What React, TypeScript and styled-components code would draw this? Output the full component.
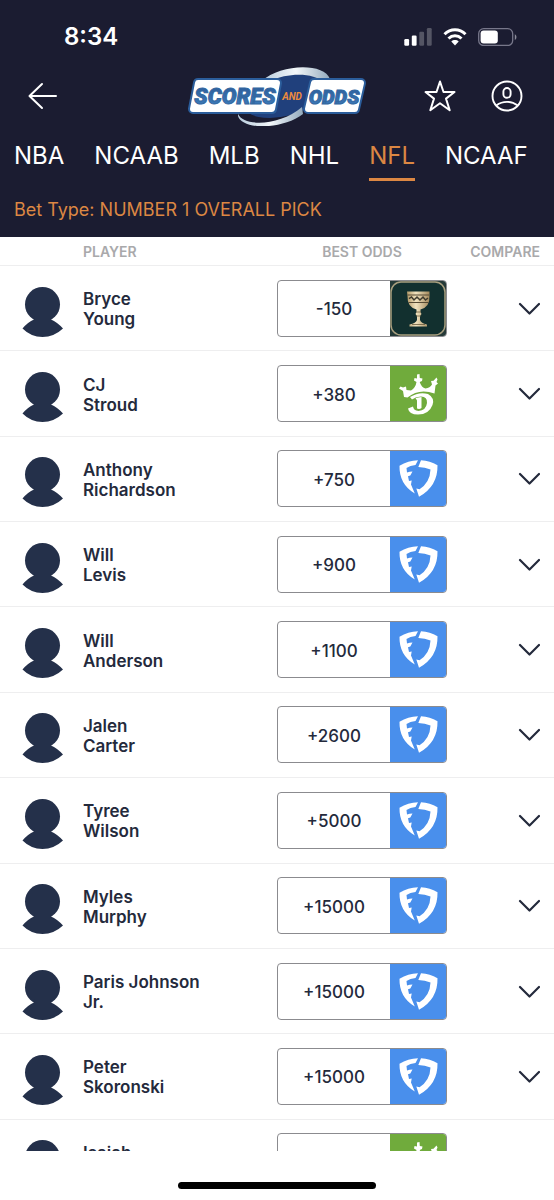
import React from "react";
import styled, { createGlobalStyle } from "styled-components";

const navy = "#1b1c31";
const orange = "#dc8743";
const ink = "#242a3c";

const GlobalStyle = createGlobalStyle`
  *, *::before, *::after { box-sizing: border-box; }
  body { margin: 0; background: #fff; font-family: Inter, "Liberation Sans", sans-serif; color: ${ink}; }
  button { font: inherit; color: inherit; background: none; border: 0; padding: 0; cursor: pointer; }
  svg { display: block; }
`;

const Screen = styled.div`
  display: flex;
  flex-direction: column;
  height: 100vh;
`;

const Header = styled.header`
  flex: none;
  background: ${navy};
  color: #fff;
  padding-bottom: 15px;
`;

const StatusBar = styled.div`
  display: flex;
  align-items: center;
  justify-content: space-between;
  height: 66px;
  padding: 8px 37px 0 64px;
  font-size: 24px;
  font-weight: 600;
  line-height: 30px;
`;

const StatusIcons = styled.div`
  display: flex;
  align-items: center;
  gap: 11px;
`;

const NavBar = styled.div`
  display: grid;
  grid-template-columns: 1fr auto 1fr;
  align-items: center;
  height: 58px;
  padding: 0 31px 0 28px;
`;

const NavActions = styled.div`
  display: flex;
  justify-content: flex-end;
  gap: 35px;
`;

const IconButton = styled.button`
  display: flex;
  justify-self: start;
`;

const Tabs = styled.nav`
  display: flex;
  gap: 30px;
  margin-top: 17px;
  padding: 0 14px;
  overflow: hidden;
`;

const Tab = styled.a<{ $active?: boolean }>`
  flex: none;
  padding-bottom: 7px;
  border-bottom: 3px solid ${(p) => (p.$active ? orange : "transparent")};
  color: ${(p) => (p.$active ? orange : "#fff")};
  font-size: 24px;
  line-height: 30px;
  text-decoration: none;
`;

const BetType = styled.button`
  display: block;
  margin: 17px 14px 0;
  && { color: ${orange}; font-size: 18px; line-height: 24px; }
`;

const List = styled.main`
  flex: 1;
  min-height: 0;
  overflow: hidden;
`;

const OddsTable = styled.table`
  width: 100%;
  height: 968px;
  table-layout: fixed;
  border-collapse: separate;
  border-spacing: 0;
`;

const Col = styled.col<{ $width?: number }>`
  width: ${(p) => (p.$width ? `${p.$width}px` : "auto")};
`;

const HeadCell = styled.th<{ $align?: string }>`
  height: 29px;
  padding: 2px 0 0;
  border-bottom: 1px solid #eeeeef;
  color: #a9a9ab;
  font-size: 14px;
  font-weight: 600;
  line-height: 26px;
  text-align: ${(p) => p.$align || "left"};
`;

const CompareHead = styled(HeadCell)`
  padding-right: 14px;
`;

const Cell = styled.td`
  padding: 0;
  border-bottom: 1px solid #eeeeef;
  vertical-align: middle;
`;

const AvatarCell = styled(Cell)`
  padding-left: 22px;
`;

const NameCell = styled(Cell)`
  padding-top: 2px;
  font-size: 17px;
  font-weight: 600;
  line-height: 20px;
`;

const NamePart = styled.span`
  display: block;
`;

const CompareCell = styled(Cell)`
  padding-right: 14px;
`;

const CompareButton = styled.button`
  display: block;
  margin-left: auto;
`;

const OddsButton = styled.button`
  && {
    display: flex;
    width: 100%;
    height: 57px;
    border: 1px solid #8b8b8f;
    border-radius: 4px;
    overflow: hidden;
    font-size: 17px;
    font-weight: 500;
  }
`;

const OddsValue = styled.span`
  flex: 1;
  align-self: center;
  padding-top: 2px;
  text-align: center;
`;

const HomeArea = styled.footer`
  flex: none;
  display: flex;
  justify-content: center;
  height: 49px;
  padding-top: 31px;
`;

const HomeIndicator = styled.div`
  width: 198px;
  height: 7px;
  border-radius: 4px;
  background: #000;
`;

const SignalIcon = () => (
  <svg width="28" height="18" viewBox="0 0 28 18" fill="#fff" aria-hidden="true">
    <rect x="0.3" y="11" width="4.8" height="6.8" rx="1.2" />
    <rect x="7.8" y="7.6" width="4.8" height="10.2" rx="1.2" />
    <rect x="15.3" y="3.8" width="4.8" height="14" rx="1.2" opacity=".25" />
    <rect x="22.9" y="0" width="4.8" height="17.8" rx="1.2" opacity=".25" />
  </svg>
);

const WifiIcon = () => (
  <svg width="24" height="18" viewBox="0 0 24 18" aria-hidden="true">
    <g fill="none" stroke="#fff" strokeWidth="3">
      <path d="M1.5 6.2C7.5.3 16.5.3 22.5 6.2" />
      <path d="M5.500 10.500C9.300 6.900 14.700 6.900 18.500 10.500" />
    </g>
    <path d="M8.300 13.500C10.500 11.600 13.500 11.600 15.700 13.500L12 17.500Z" fill="#fff" />
  </svg>
);

const BatteryIcon = () => (
  <svg width="39" height="18" viewBox="0 0 39 18" aria-hidden="true">
    <rect x=".7" y=".7" width="34" height="16.8" rx="5" fill="none" stroke="#77778a" strokeWidth="1.3" />
    <rect x="2.6" y="2.6" width="17.2" height="13" rx="3" fill="#fff" />
    <path d="M36.8 6.3C39 7.2 39 11 36.8 11.9Z" fill="#8b8b99" />
  </svg>
);

const BackIcon = () => (
  <svg width="29" height="28" viewBox="0 0 29 28" fill="none" stroke="#fff" strokeWidth="2" strokeLinecap="round" strokeLinejoin="round" aria-hidden="true">
    <path d="M14 2L1.5 14L14 26M2 14H28" />
  </svg>
);

const StarIcon = () => (
  <svg width="32" height="32" viewBox="0 0 32 32" fill="none" stroke="#fff" strokeWidth="2" strokeLinejoin="round" aria-hidden="true">
    <path d="M16 1.5L19.500 12H30.500L22 18.600L25.700 30.200L16 23.200L6.300 30.200L10 18.600L1.500 12H12.500Z" />
  </svg>
);

const ProfileIcon = () => (
  <svg width="32" height="32" viewBox="0 0 32 32" fill="none" stroke="#fff" strokeWidth="1.9" aria-hidden="true">
    <circle cx="16" cy="16" r="14.5" />
    <rect x="12.4" y="8" width="7.2" height="9.8" rx="3.6" />
    <path d="M5.6 25.3C11.5 20.7 20.5 20.7 26.4 25.3" />
  </svg>
);

const Logo = () => (
  <svg width="184" height="60" viewBox="0 0 184 60" role="img" aria-label="Scores and Odds">
    <defs>
      <linearGradient id="swoosh" x1="0" x2="1">
        <stop offset="0" stopColor="#b7cbdc" />
        <stop offset=".5" stopColor="#f3f7fa" />
        <stop offset="1" stopColor="#93aabd" />
      </linearGradient>
      <linearGradient id="letters" x1="0" y1="0" x2="0" y2="1">
        <stop offset="0" stopColor="#2b5a98" />
        <stop offset="1" stopColor="#3f80bf" />
      </linearGradient>
    </defs>
    <ellipse cx="100" cy="30" rx="42" ry="20" transform="rotate(-14 100 30)" fill="#20407c" />
    <path d="M78 15C96-2 140-4 146 13L139 17C131 6 102 7 87 15Z" fill="url(#swoosh)" />
    <path d="M54 48C60 61 96 60 118 41L119 48C98 64 58 64 54 50Z" fill="url(#swoosh)" />
    <g strokeLinejoin="round">
      <g stroke="#2b5d9b" strokeWidth="10">
        <path d="M14 17H93L88 43H9Z" />
        <path d="M130 17H177L171 43H124Z" />
      </g>
      <g fill="#fff" stroke="#fff" strokeWidth="6">
        <path d="M14 17H93L88 43H9Z" />
        <path d="M130 17H177L171 43H124Z" />
      </g>
    </g>
    <g fontFamily='Roboto, "Liberation Sans", sans-serif' fontWeight="900" fontStyle="italic" textAnchor="middle">
      <g fill="url(#letters)" stroke="#33679f" strokeWidth="1" fontSize="22">
        <text x="51" y="38">SCORES</text>
        <text x="150" y="38" fontSize="20">ODDS</text>
      </g>
      <text x="108" y="34" fontSize="10" fontWeight="700" fill="#ec8b3c">AND</text>
    </g>
  </svg>
);

const Avatar = () => (
  <svg width="42" height="57" viewBox="0 0 42 57" fill="#24304a" aria-hidden="true">
    <circle cx="20.5" cy="24.5" r="17.5" />
    <path d="M.5 48.5Q6 42 12 39.5L13 36H28L29 39.500Q35 42 41 48.500Q32 57 20.500 57Q9 57 .5 48.500Z" />
  </svg>
);

const ChevronIcon = () => (
  <svg width="22" height="13" viewBox="0 0 22 13" fill="none" stroke={ink} strokeWidth="2.2" strokeLinecap="round" strokeLinejoin="round" aria-hidden="true">
    <path d="M2 2L11.500 11.500L21 2" />
  </svg>
);

const CupLogo = () => (
  <svg width="56" height="55" viewBox="0 0 56 55" role="img" aria-label="Goblet">
    <defs>
      <linearGradient id="gold" x1="0" x2="1">
        <stop offset="0" stopColor="#b39a69" />
        <stop offset=".4" stopColor="#f1e3bf" />
        <stop offset="1" stopColor="#a3895c" />
      </linearGradient>
    </defs>
    <rect width="56" height="55" fill="#253a38" />
    <rect x="1" y="1" width="54" height="53" rx="10" fill="#12302f" stroke="#a99f7f" strokeWidth="1.5" />
    <path d="M17 10.500H39.500V15Q40 26 30.500 28.500V31L31.500 33L30 35V39Q31 42 37 43.500V45.500H19.500V43.500Q26 42 27 39V35L25.500 33L26.500 31V28.500Q17 26 17.500 15Z" fill="url(#gold)" />
    <path d="M17.500 14H39M18.500 21.500H38.500" stroke="#574b34" strokeWidth="1" />
    <path d="M19 17.700L21.500 16L24 19L27 16L30 19L33 16L35.500 19L38 17" fill="none" stroke="#3f3b2e" strokeWidth="1.5" />
    <path d="M26 31H31M26 35H31M22 43.500H35" stroke="#6b5b3c" strokeWidth=".8" />
  </svg>
);

const CrownLogo = () => (
  <svg width="56" height="55" viewBox="0 0 56 55" role="img" aria-label="Crown D">
    <rect width="56" height="55" fill="#70ab3c" />
    <path d="M14 31L13 25L9 22.500L10.500 20.500L13 21.500L16 20.500L16.500 24L21 24.500Q25.500 22 26.500 16L24 14.500L24.500 12L27 12.500V8.500L29.500 8L29.800 12L32.500 12.500L32 15L29.700 16Q31.500 21.500 35.500 22.500Q40 22 42 18.500L41 15L43.500 14.700L46.500 11.500L47.500 13.500L46.500 16L48 17.500L45.500 19.500L44.500 27.500Q29 22 17.500 31.500Z" fill="#fff" />
    <path d="M20 31Q29 25.500 38 28Q45 32 42.500 39Q39 48.500 28 48.500Q19 48.500 18 42.500L23 40.500Q23.500 44.500 28.500 45Q36 44.500 37 37Q37.500 30.500 31 30.500Q26 30.500 22 33.500Z" fill="#fff" />
    <path d="M25.500 32L31.500 31V42Q29.500 43.500 27 42.500V34.500Z" fill="#fff" />
  </svg>
);

const ShieldLogo = () => (
  <svg width="56" height="55" viewBox="0 0 56 55" role="img" aria-label="Shield">
    <rect width="56" height="55" fill="#498fec" />
    <g fill="#fff">
      <path d="M9.500 14.700Q18 9.500 28 9.200L25.500 14Q20 14.700 16.500 17L17 21.500Q19.500 20.600 22.500 20.600L20.300 24.500L18 25.200L19 30L21.700 29.500L21 33.500L24.800 42.500Q9 33 9.500 14.700Z" />
      <path d="M31 9.200Q40 9.500 47.500 14.200Q48 35 29 45.800L26.300 37.500L29.500 38.300Q40 31.500 40.500 18.500Q35 16.300 28.300 16Z" />
    </g>
  </svg>
);

const bookLogos = { cup: CupLogo, crown: CrownLogo, shield: ShieldLogo };

interface Player {
  first: string;
  last: string;
  odds: string;
  book: keyof typeof bookLogos;
}

const players: Player[] = [
  { first: "Bryce", last: "Young", odds: "-150", book: "cup" },
  { first: "CJ", last: "Stroud", odds: "+380", book: "crown" },
  { first: "Anthony", last: "Richardson", odds: "+750", book: "shield" },
  { first: "Will", last: "Levis", odds: "+900", book: "shield" },
  { first: "Will", last: "Anderson", odds: "+1100", book: "shield" },
  { first: "Jalen", last: "Carter", odds: "+2600", book: "shield" },
  { first: "Tyree", last: "Wilson", odds: "+5000", book: "shield" },
  { first: "Myles", last: "Murphy", odds: "+15000", book: "shield" },
  { first: "Paris Johnson", last: "Jr.", odds: "+15000", book: "shield" },
  { first: "Peter", last: "Skoronski", odds: "+15000", book: "shield" },
  { first: "Isaiah", last: "", odds: "", book: "crown" },
];

const leagues = ["NBA", "NCAAB", "MLB", "NHL", "NFL", "NCAAF"];

const PlayerRow = ({ first, last, odds, book }: Player) => {
  const BookLogo = bookLogos[book];
  return (
    <tr>
      <AvatarCell>
        <Avatar />
      </AvatarCell>
      <NameCell>
        <NamePart>{first}</NamePart>
        <NamePart>{last || "\u00a0"}</NamePart>
      </NameCell>
      <Cell>
        <OddsButton type="button">
          <OddsValue>{odds}</OddsValue>
          <BookLogo />
        </OddsButton>
      </Cell>
      <CompareCell>
        <CompareButton type="button" aria-label={`Compare odds for ${first} ${last}`}>
          <ChevronIcon />
        </CompareButton>
      </CompareCell>
    </tr>
  );
};

export default function App() {
  return (
    <Screen>
      <GlobalStyle />
      <Header>
        <StatusBar>
          <span>8:34</span>
          <StatusIcons>
            <SignalIcon />
            <WifiIcon />
            <BatteryIcon />
          </StatusIcons>
        </StatusBar>
        <NavBar>
          <IconButton type="button" aria-label="Back">
            <BackIcon />
          </IconButton>
          <Logo />
          <NavActions>
            <IconButton type="button" aria-label="Favorites">
              <StarIcon />
            </IconButton>
            <IconButton type="button" aria-label="Profile">
              <ProfileIcon />
            </IconButton>
          </NavActions>
        </NavBar>
        <Tabs>
          {leagues.map((league) => (
            <Tab key={league} href={`#${league}`} $active={league === "NFL"}>
              {league}
            </Tab>
          ))}
        </Tabs>
        <BetType type="button">Bet Type: NUMBER 1 OVERALL PICK</BetType>
      </Header>
      <List>
        <OddsTable>
          <colgroup>
            <Col $width={83} />
            <Col />
            <Col $width={170} />
            <Col $width={107} />
          </colgroup>
          <thead>
            <tr>
              <HeadCell as="td" />
              <HeadCell scope="col">PLAYER</HeadCell>
              <HeadCell scope="col" $align="center">BEST ODDS</HeadCell>
              <CompareHead scope="col" $align="right">COMPARE</CompareHead>
            </tr>
          </thead>
          <tbody>
            {players.map((player) => (
              <PlayerRow key={player.first + player.last} {...player} />
            ))}
          </tbody>
        </OddsTable>
      </List>
      <HomeArea>
        <HomeIndicator />
      </HomeArea>
    </Screen>
  );
}
